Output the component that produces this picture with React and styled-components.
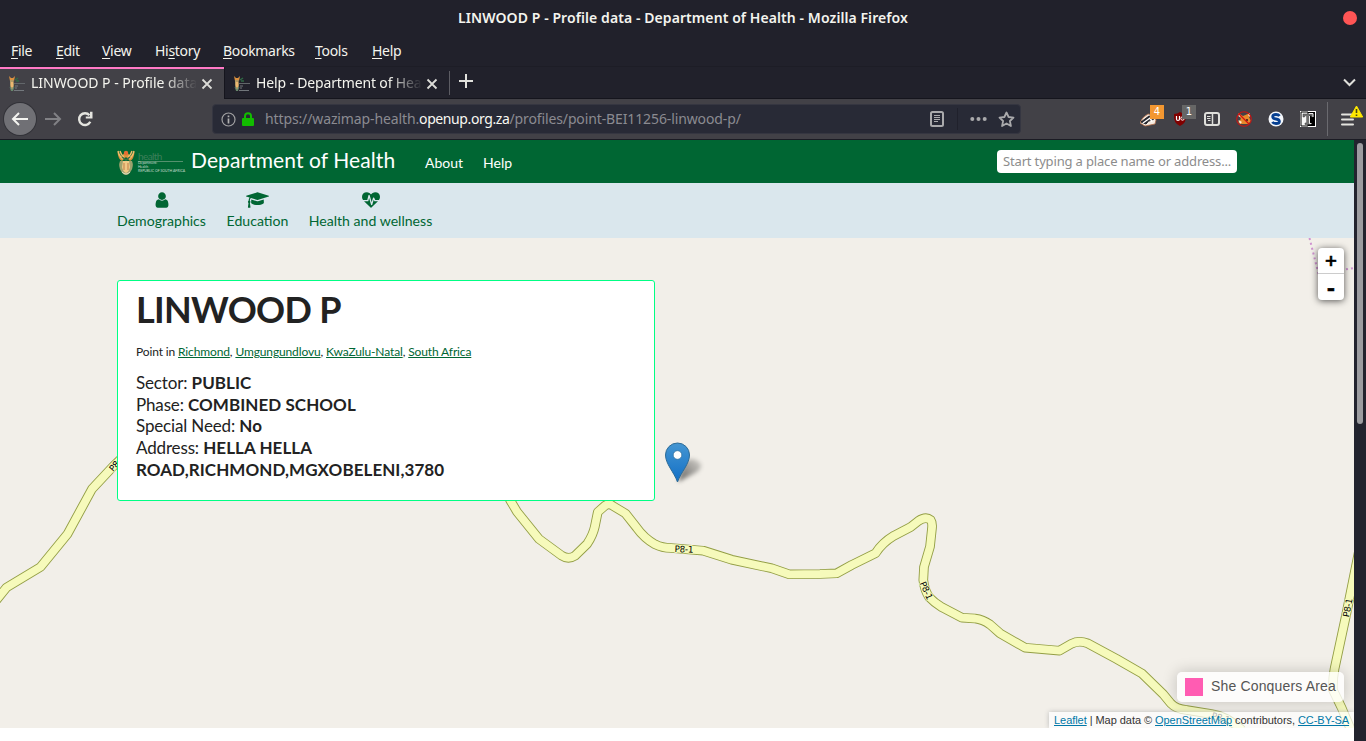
import React from 'react';
import styled, { createGlobalStyle } from 'styled-components';

const Global = createGlobalStyle`
  * { box-sizing: border-box; }
  body { margin: 0; overflow: hidden; }
  svg { display: block; flex: none; }
`;

const Window = styled.div`
  width: 1366px;
  height: 741px;
  display: flex;
  flex-direction: column;
  background: #21212b;
  color: #f4f4ee;
  font: 14px/20px "Noto Sans", sans-serif;
  overflow: hidden;
  white-space: nowrap;
`;

const TitleBar = styled.header`
  height: 36px;
  display: grid;
  grid-template-columns: 1fr auto 1fr;
  align-items: center;
  padding: 0 10px;
`;
const WindowTitle = styled.h1`
  grid-column: 2;
  margin: 0;
  font-size: 14px;
  font-weight: 600;
  letter-spacing: ${(p) => p.$spacing}px;
`;
const CloseDot = styled.span`
  justify-self: end;
  width: 14px;
  height: 14px;
  margin-right: -1px;
  border-radius: 50%;
  background: #ff5555;
`;

const MenuBar = styled.nav`
  height: 30px;
  display: flex;
  align-items: center;
  padding-left: 11px;
`;
const MenuItem = styled.span`
  width: ${(p) => p.$width}px;
  letter-spacing: -0.3px;
  u { text-underline-offset: 2px; text-decoration-thickness: 1px; }
`;

const TabStrip = styled.div`
  height: 33px;
  display: flex;
  border-top: 1px solid #1d1d26;
  border-bottom: 1px solid #15151d;
`;
const Tab = styled.div`
  width: ${(p) => p.$width}px;
  height: ${(p) => (p.$active ? 33 : 31)}px;
  display: flex;
  align-items: center;
  padding: 0 0 ${(p) => (p.$active ? 2 : 0)}px 8px;
  background: ${(p) => (p.$active ? '#424147' : 'transparent')};
  border-top: 2px solid ${(p) => (p.$active ? '#ff79c6' : 'transparent')};
  border-left: ${(p) => (p.$active ? 'none' : '1px solid #15151d')};
`;
const TabLabel = styled.span`
  width: 166px;
  margin: 0 4px 1px 6px;
  overflow: hidden;
  letter-spacing: ${(p) => p.$spacing}px;
  mask-image: linear-gradient(to right, #000 80%, transparent);
`;
const StripDivider = styled.span`
  width: 1px;
  height: 24px;
  margin: 4px 9px 0 0;
  background: #5c5c63;
`;
const NewTab = styled.svg`margin-top: 7px;`;
const AllTabs = styled.svg`margin: 11px 10px 0 auto;`;

const Toolbar = styled.div`
  height: 41px;
  display: flex;
  align-items: center;
  padding-left: 4px;
  background: #424147;
  border-bottom: 1px solid #1b1b24;
`;
const BackButton = styled.span`
  width: 32px;
  height: 32px;
  display: flex;
  align-items: center;
  justify-content: center;
  border-radius: 50%;
  background: #707075;
  box-shadow: 0 0 0 1px #323238;
`;
const NavIcon = styled.svg`margin-left: ${(p) => p.$gap}px;`;
const UrlBar = styled.div`
  width: 809px;
  height: 30px;
  margin-left: 119px;
  display: flex;
  align-items: center;
  padding-left: 8px;
  border: 1px solid #353641;
  border-radius: 4px;
  background: #282a36;
`;
const Url = styled.span`
  width: 662px;
  margin: 0 0 1px 11px;
  color: #8b8b91;
  letter-spacing: ${(p) => p.$spacing}px;
  b { font-weight: 400; color: #f8f8f2; letter-spacing: -0.4px; }
`;
const UrlDivider = styled.span`
  width: 1px;
  height: 22px;
  margin: 0 12px 0 13px;
  background: #20212c;
`;
const Extensions = styled.div`
  display: flex;
  align-items: center;
  gap: 16px;
  margin-left: 119px;
`;
const Extension = styled.span`
  position: relative;
  width: 16px;
  height: 16px;
`;
const Badge = styled.span`
  position: absolute;
  top: -6px;
  left: 10px;
  width: 14px;
  height: 14px;
  text-align: center;
  font: 10px/13px "DejaVu Sans", sans-serif;
  color: #fff;
  background: ${(p) => p.$color};
`;
const ToolbarDivider = styled.span`
  width: 1px;
  height: 34px;
  margin: 0 12px 0 11px;
  background: #6a6a6f;
`;

const Viewport = styled.div`
  flex: 1;
  display: flex;
`;
const Page = styled.main`
  width: 1354px;
  display: flex;
  flex-direction: column;
  background: #fff;
  font-family: Lato, sans-serif;
`;
const ScrollTrack = styled.div`
  width: 12px;
  padding: 3px 3px 0;
  background: #22232e;
`;
const ScrollThumb = styled.div`
  width: 6px;
  height: 281px;
  border-radius: 3px;
  background: #9c9ca0;
`;

const SiteHeader = styled.header`
  height: 43px;
  display: flex;
  align-items: center;
  padding: 0 117px;
  background: #006633;
  color: #fff;
`;
const SiteName = styled.span`
  width: 234px;
  margin: 0 0 4px 8px;
  font-size: 21px;
  line-height: 26px;
  letter-spacing: ${(p) => p.$spacing}px;
`;
const SiteLink = styled.a`
  margin: 3px 20px 0 0;
  font-size: 14px;
  letter-spacing: ${(p) => p.$spacing}px;
`;
const Search = styled.div`
  width: 240px;
  height: 23px;
  margin: 0 0 1px auto;
  padding-left: 6px;
  border-radius: 4px;
  background: #fff;
  color: #8c8c8c;
  font: 13px/23px "Noto Sans", sans-serif;
  letter-spacing: ${(p) => p.$spacing}px;
`;

const TopicNav = styled.nav`
  height: 55px;
  display: flex;
  gap: 20px;
  padding: 7px 117px 0;
  background: #dae7ed;
  color: #006633;
`;
const Topic = styled.a`
  display: flex;
  flex-direction: column;
  align-items: center;
  width: ${(p) => p.$width}px;
  font-size: 14.1px;
  line-height: 20px;
  svg { height: 18px; margin: 1px 0 2px; }
`;

const Map = styled.section`
  position: relative;
  height: 490px;
  background: #f2efe9;
  overflow: hidden;
`;
const Roads = styled.svg`
  position: absolute;
  inset: 0;
`;
const ProfileCard = styled.article`
  position: absolute;
  left: 117px;
  top: 42px;
  width: 538px;
  height: 221px;
  padding: 0 18px;
  border: 1px solid #00ff84;
  border-radius: 3px;
  background: #fff;
  color: #222;
`;
const PlaceName = styled.h2`
  margin: 7px 0 0;
  font: 700 36px/42px Lato, sans-serif;
  letter-spacing: ${(p) => p.$spacing}px;
`;
const Breadcrumb = styled.p`
  margin: 13px 0 11px;
  font-size: 12px;
  line-height: 18px;
  letter-spacing: ${(p) => p.$spacing}px;
  a { color: #006633; text-decoration: underline; }
`;
const Facts = styled.div`
  font-size: 17px;
  line-height: 21.7px;
  letter-spacing: -0.15px;
  b { letter-spacing: ${(p) => p.$spacing}px; }
`;
const ZoomControl = styled.div`
  position: absolute;
  right: 10px;
  top: 10px;
  width: 26px;
  border-radius: 4px;
  background: #fff;
  box-shadow: 0 1px 7px rgba(0, 0, 0, 0.65);
`;
const ZoomButton = styled.div`
  height: 26px;
  border-bottom: ${(p) => (p.$last ? 'none' : '1px solid #ccc')};
  text-align: center;
  color: #000;
  font: 700 ${(p) => (p.$last ? 20 : 16)}px/${(p) => (p.$last ? 28 : 26)}px "DejaVu Sans", sans-serif;
  -webkit-text-stroke: 0.5px #000;
`;
const Legend = styled.div`
  position: absolute;
  right: 10px;
  bottom: 26px;
  width: 167px;
  height: 30px;
  display: flex;
  align-items: center;
  gap: 8px;
  padding: 0 8px;
  border-radius: 5px;
  background: rgba(255, 255, 255, 0.8);
  box-shadow: 0 0 15px rgba(0, 0, 0, 0.2);
  color: #555;
  font: 14px/18px "Liberation Sans", sans-serif;
  letter-spacing: ${(p) => p.$spacing}px;
`;
const LegendLabel = styled.span`margin-bottom: 2px;`;
const Swatch = styled.span`
  width: 18px;
  height: 18px;
  background: #ff5cb2;
`;
const Attribution = styled.div`
  position: absolute;
  right: 0;
  bottom: 0;
  width: 305px;
  height: 16px;
  padding-left: 5px;
  background: rgba(255, 255, 255, 0.7);
  box-shadow: 0 0 5px #bbb;
  color: #333;
  font: 11px/16px "Liberation Sans", sans-serif;
  letter-spacing: -0.05px;
  a { color: #0078a8; text-decoration: underline; }
`;

const roads = [
  'M-6 603L6.5 587.5L40.5 567L67.5 534L92 489L113.5 466L124 456',
  'M505 490L510.5 500.7L517 511.7L539 539L561.5 555.5Q568.3 560 575 555.7L587.3 543.7Q593 535 594.8 526.7L597.8 512L605 505.7Q609.3 502.5 613 506L625.5 513.5L636.7 527.7Q644 538 655 544.3Q662 548 671 548L683 549L703.3 550.7L731.7 559.7L771.7 568.3L789 574.3L820 574L836.7 573.3L851.7 565L875.5 553.3Q882 543 894 535.7L910.7 527L918.3 521Q925.7 516 930.7 520Q932.5 522.5 932 528L930 546.7L924 567L923.3 580Q924.5 590 929 597Q934 602.5 942 607.3L962 617.7L975 618.5Q983 619.5 990 624.5L1000 633.3L1025 647.7L1059.5 650.7L1071.7 643.7Q1079 640 1087.5 643.3L1116.7 659L1141.7 673.3L1163.3 694.3L1170.7 703.3Q1176 709 1186.7 710L1213 714.3Q1226 716 1242 730',
  'M1359 551L1346.3 614L1334.5 669Q1332.5 680 1333 690L1341.7 708L1351 730',
];

const roadLabels = [
  { x: 117, y: 463, angle: -49 },
  { x: 684, y: 549, angle: 2 },
  { x: 926.5, y: 590.5, angle: 66 },
  { x: 1347.5, y: 607.5, angle: -79 },
  { x: 1221, y: 717.5, angle: 14 },
];

function RoadMap() {
  return (
    <Roads width="1354" height="490" viewBox="0 238 1354 490">
      <defs>
        <linearGradient id="pin" x1="0" y1="0" x2="0" y2="1">
          <stop offset="0" stopColor="#4596d2" />
          <stop offset="1" stopColor="#126fc6" />
        </linearGradient>
        <linearGradient id="pinShade" x1="0" y1="1" x2="1" y2="0">
          <stop offset="0" stopColor="#000" stopOpacity=".6" />
          <stop offset="1" stopColor="#000" stopOpacity=".12" />
        </linearGradient>
        <filter id="soft" x="-50%" y="-50%" width="200%" height="200%">
          <feGaussianBlur stdDeviation="2" />
        </filter>
      </defs>
      <g fill="none" strokeLinejoin="round">
        {roads.map((d) => <path key={d} d={d} stroke="#939e45" strokeWidth="9.6" />)}
        {roads.map((d) => <path key={d} d={d} stroke="#f6fabb" strokeWidth="7.8" />)}
        <path d="M1309.500 238L1318.500 274L1354 268" stroke="#cf93d0" strokeWidth="2" strokeDasharray="2 3" />
      </g>
      <g fontFamily="DejaVu Sans, sans-serif" fontSize="9" fill="#000" stroke="#f6fabb" strokeWidth="1.6" paintOrder="stroke" textAnchor="middle">
        {roadLabels.map((l) => (
          <text key={l.x} transform={`translate(${l.x} ${l.y}) rotate(${l.angle})`} y="3.3" textLength="19">P8-1</text>
        ))}
      </g>
      <path d="M678 482L683 464Q690 456 698 461Q705 466 697 472Z" fill="url(#pinShade)" filter="url(#soft)" />
      <path d="M677.500 482C674 472 665.500 464 665.500 455A12 12 0 0 1 689.500 455C689.500 464 681 472 677.500 482Z" fill="url(#pin)" stroke="#2e6c97" strokeWidth="1" />
      <circle cx="677.5" cy="455" r="4.3" fill="#fff" stroke="#2e6c97" strokeWidth=".7" />
    </Roads>
  );
}

function Emblem({ size, height }) {
  return (
    <svg width={size} height={height} viewBox="0 0 18 26">
      <path d="M.5 2Q1 9 5 11L9 7L13 11Q17 9 17.500 2L14 7L9 1L4 7Z" fill="#d9913c" />
      <path d="M1 1Q2 6 6 9M17 1Q16 6 12 9M3 1Q4 5 7 7M15 1Q14 5 11 7" fill="none" stroke="#f0bd6b" strokeWidth="1.4" />
      <circle cx="9" cy="3" r="2.2" fill="#e66f35" />
      <path d="M5 7L9 10L13 7" fill="none" stroke="#397149" strokeWidth="1.5" />
      <path d="M3 11H15Q17 16 14 21Q12 25 9 25Q6 25 4 21Q1 16 3 11Z" fill="#9da16d" />
      <path d="M6 11H12L13 17Q12 22 9 23Q6 22 5 17Z" fill="#efc886" />
      <path d="M7 13V20M11 13V20" stroke="#c98a52" strokeWidth="1.200" />
      <path d="M5 22Q9 26 13 22" fill="none" stroke="#dfe2c1" strokeWidth="1" />
    </svg>
  );
}

const LogoMark = styled.div`
  width: 66px;
  height: 26px;
  display: flex;
  gap: 3px;
  margin-top: 3px;
`;
const LogoText = styled.div`
  width: 45px;
  padding-top: 1px;
  color: #6da282;
  font: 10px/10px Lato, sans-serif;
  i { display: block; font-style: normal; color: #3c7f59; border-bottom: 1px solid #55916e; height: 11px; letter-spacing: -0.6px; }
  small { display: block; font-size: 3.5px; line-height: 3.9px; letter-spacing: -0.03px; color: #c8dccf; }
`;

function Favicon() {
  return (
    <svg width="17" height="17" viewBox="0 0 17 17">
      <path d="M1 1L2 6L4.500 5L6 6L7 1L5 3H3Z" fill="#db9140" />
      <path d="M2 5H5.500L6 10L5 16H3L2 10Z" fill="#b59a63" />
      <path d="M3 7H5V12H3Z" fill="#edb771" />
      <path d="M2 12L4 16L6 12" fill="none" stroke="#548471" />
      <path d="M7 5L10 3M8 6H11" stroke="#2f6a45" strokeWidth="1.500" />
      <path d="M6 8.500H17" stroke="#62666a" />
      <path d="M7 11H10M7 13H9M6 15.500H16" stroke="#7b8084" strokeWidth=".9" />
    </svg>
  );
}

function TabClose() {
  return (
    <svg width="12" height="12" viewBox="0 0 12 12">
      <path d="M1.500 1.500L10.500 10.500M10.500 1.500L1.500 10.500" stroke="#dcdcd8" strokeWidth="1.8" />
    </svg>
  );
}

const menus = [['', 'F', 'ile', 45], ['', 'E', 'dit', 46], ['', 'V', 'iew', 53], ['Hi', 's', 'tory', 68], ['', 'B', 'ookmarks', 92], ['', 'T', 'ools', 57], ['', 'H', 'elp', 40]];

function FirefoxToolbar() {
  return (
    <Toolbar>
      <BackButton>
        <svg width="18" height="16" viewBox="0 0 18 16"><path d="M17 8H2M8 2L2 8L8 14" fill="none" stroke="#f4f4f0" strokeWidth="2" /></svg>
      </BackButton>
      <NavIcon $gap={9} width="17" height="16" viewBox="0 0 17 16"><path d="M0 8H15M9 2L15 8L9 14" fill="none" stroke="#818185" strokeWidth="2" /></NavIcon>
      <NavIcon $gap={15} width="16" height="16" viewBox="0 0 16 16">
        <path d="M13.300 10.800A5.900 5.900 0 1 1 12.500 4.200" fill="none" stroke="#e4e4df" strokeWidth="2.400" />
        <path d="M15.500 .8V7.500H8.800V5.500H13V.8Z" fill="#e4e4df" />
      </NavIcon>
      <UrlBar>
        <svg width="15" height="15" viewBox="0 0 15 15">
          <circle cx="7.500" cy="7.500" r="6.500" fill="none" stroke="#a0a0a2" strokeWidth="1.200" />
          <path d="M7.500 6.500V11.500M7.500 3.500V5.300" stroke="#b0b0b0" strokeWidth="1.700" />
        </svg>
        <NavIcon $gap={6} width="12" height="14" viewBox="0 0 12 14">
          <path d="M3 7V4Q3 1.200 6 1.200T9 4V7" fill="none" stroke="#12bc00" strokeWidth="2" />
          <rect y="6" width="12" height="8" rx="1" fill="#12bc00" />
        </NavIcon>
        <Url $spacing={-0.12}>https://wazimap-health.<b>openup.org.za</b>/profiles/point-BEI11256-linwood-p/</Url>
        <NavIcon $gap={3} width="14" height="16" viewBox="0 0 14 16">
          <rect x="1" y="1" width="12" height="14" rx="1.500" fill="none" stroke="#aaaaac" strokeWidth="2" />
          <path d="M4 4.500H10M4 6.500H10M4 8.500H10M4 10.500H8" stroke="#aaaaac" />
        </NavIcon>
        <UrlDivider />
        <svg width="17" height="6" viewBox="0 0 17 6" fill="#aaaaac"><circle cx="2.300" cy="3" r="2" /><circle cx="8.500" cy="3" r="2" /><circle cx="14.700" cy="3" r="2" /></svg>
        <NavIcon $gap={11} width="17" height="17" viewBox="0 0 17 17">
          <path d="M8.500 1.500L10.600 6L15.500 6.600L11.900 10L12.900 15L8.500 12.500L4.100 15L5.100 10L1.500 6.600L6.400 6Z" fill="none" stroke="#aaaaac" strokeWidth="1.800" strokeLinejoin="round" />
        </NavIcon>
      </UrlBar>
      <Extensions>
        <Extension>
          <svg width="17" height="16" viewBox="0 0 17 16">
            <path d="M0 12Q2 6 8 3L13 4L16 9L15 13L5 15Z" fill="#f5e9df" stroke="#b46d48" strokeWidth=".8" />
            <path d="M1 11L9 5L12 6L6 13ZM9 10L14 8" fill="#24242a" stroke="#24242a" />
            <path d="M3 12L10 7L12 11" fill="none" stroke="#fff" strokeWidth="1.500" />
          </svg>
          <Badge $color="#f39731">4</Badge>
        </Extension>
        <Extension>
          <svg width="16" height="16" viewBox="0 0 16 16">
            <path d="M8 1Q11 3 14 3Q15 12 8 15Q1 12 2 3Q5 3 8 1Z" fill="#800000" />
            <path d="M4.500 5V8Q4.500 9.500 6 9.500T7.500 8V5" fill="none" stroke="#fff" strokeWidth="1.200" />
            <circle cx="10.500" cy="7.500" r="1.700" fill="none" stroke="#fff" />
          </svg>
          <Badge $color="#666666">1</Badge>
        </Extension>
        <Extension>
          <svg width="16" height="16" viewBox="0 0 16 16">
            <rect x="1" y="2" width="14" height="12" rx="2" fill="none" stroke="#dfdfdb" strokeWidth="2" />
            <path d="M8.500 2V14" stroke="#dfdfdb" strokeWidth="1.500" />
            <path d="M3 5.500H6.500M3 7.500H6.500M4 9.500H6.500" stroke="#dfdfdb" />
          </svg>
        </Extension>
        <Extension>
          <svg width="16" height="16" viewBox="0 0 16 16">
            <path d="M2 2L7 5L14 2L13 6L15 10L12 13H5L2 11L5 8Z" fill="#e8892b" />
            <path d="M2.500 9L6 11L4 13ZM12 4L14 2V6ZM2 3L5 5L3 6Z" fill="#fff1d8" />
            <path d="M10 8H12V10H10Z" fill="#5d3520" />
            <circle cx="8" cy="8" r="7.300" fill="none" stroke="#c81414" strokeWidth="1.100" />
            <path d="M3 3L13 13" stroke="#d31111" strokeWidth="1.300" />
          </svg>
        </Extension>
        <Extension>
          <svg width="16" height="16" viewBox="0 0 16 16">
            <circle cx="8" cy="8" r="7.500" fill="#f4f7fb" />
            <path d="M11.500 5Q10.500 3.500 8 3.500Q4.700 3.500 4.700 5.700Q4.700 7.500 8 8Q11.400 8.500 11.400 10.400Q11.400 12.500 8 12.500Q5.500 12.500 4.300 11" fill="none" stroke="#063f91" strokeWidth="2.800" />
          </svg>
        </Extension>
        <Extension>
          <svg width="16" height="16" viewBox="0 0 16 16">
            <path d="M0 0H16V16H0Z" fill="#fff" />
            <path d="M1 1H8V15H1Z" fill="#f8f8f8" stroke="#000" />
            <path d="M8 1H15V15H8Z" fill="#000" />
            <path d="M3 3H13V6H11.500V4.800H9.300V12H11V13.500H5V12H6.700V4.800H4.500V6H3Z" fill="#777" stroke="#333" strokeWidth=".5" />
            <path d="M8.500 2.500H13V6M9.500 5V12.500H11.500" fill="none" stroke="#eee" />
          </svg>
        </Extension>
      </Extensions>
      <ToolbarDivider />
      <svg width="24" height="30" viewBox="0 0 24 30">
        <path d="M2 10.500H13M2 15.500H13M2 20.500H13" stroke="#e4e4df" strokeWidth="2" strokeLinecap="round" />
        <path d="M16.500 2L22.700 13H10.300Z" fill="#ffe900" stroke="#ffe900" strokeLinejoin="round" />
        <path d="M16.500 5V9M16.500 10.500V12" stroke="#4a4710" strokeWidth="1.600" />
      </svg>
    </Toolbar>
  );
}

export default function App() {
  return (
    <Window>
      <Global />
      <TitleBar>
        <WindowTitle $spacing={0.08}>LINWOOD P - Profile data - Department of Health - Mozilla Firefox</WindowTitle>
        <CloseDot />
      </TitleBar>
      <MenuBar>
        {menus.map(([before, key, after, width]) => (
          <MenuItem key={after} $width={width}>{before}<u>{key}</u>{after}</MenuItem>
        ))}
      </MenuBar>
      <TabStrip>
        <Tab $active $width={224}><Favicon /><TabLabel $spacing={-0.03}>LINWOOD P - Profile data</TabLabel><TabClose /></Tab>
        <Tab $width={225}><Favicon /><TabLabel $spacing={-0.15}>Help - Department of Health</TabLabel><TabClose /></Tab>
        <StripDivider />
        <NewTab width="14" height="14" viewBox="0 0 14 14"><path d="M7 0V14M0 7H14" stroke="#e2e2dd" strokeWidth="2" /></NewTab>
        <AllTabs width="13" height="9" viewBox="0 0 13 9"><path d="M1 1.500L6.500 7L12 1.500" fill="none" stroke="#dfdfdb" strokeWidth="2" /></AllTabs>
      </TabStrip>
      <FirefoxToolbar />
      <Viewport>
        <Page>
          <SiteHeader>
            <LogoMark>
              <Emblem size={18} height={26} />
              <LogoText><i>health</i><small>Department:</small><small>Health</small><small>REPUBLIC OF SOUTH AFRICA</small></LogoText>
            </LogoMark>
            <SiteName $spacing={0.08}>Department of Health</SiteName>
            <SiteLink $spacing={0}>About</SiteLink>
            <SiteLink $spacing={0}>Help</SiteLink>
            <Search $spacing={-0.16}>Start typing a place name or address...</Search>
          </SiteHeader>
          <TopicNav>
            <Topic $width={89}>
              <svg width="18" viewBox="0 0 1792 1792" fill="currentColor"><path d="M1536 1399q0 109-62.500 187t-150.500 78h-854q-88 0-150.500-78t-62.500-187q0-85 8.500-160.500t31.500-152 58.500-131 94-89 134.500-34.500q131 128 313 128t313-128q76 0 134.500 34.500t94 89 58.500 131 31.500 152 8.500 160.500zm-256-887q0 159-112.500 271.500t-271.500 112.500-271.500-112.500-112.500-271.500 112.500-271.500 271.500-112.500 271.500 112.500 112.500 271.500z" /></svg>
              Demographics
            </Topic>
            <Topic $width={63}>
              <svg width="23" viewBox="0 0 2304 1792" fill="currentColor"><path d="M1774 836l18 316q4 69-82 128t-235 93.500-323 34.500-323-34.500-235-93.500-82-128l18-316 574 181q22 7 48 7t48-7zm530-324q0 23-22 31l-1120 352q-4 1-10 1t-10-1l-652-206q-43 34-71 111.500t-34 178.500q63 36 63 109 0 69-58 107l58 433q2 14-8 25-9 11-24 11h-192q-15 0-24-11-10-11-8-25l58-433q-58-38-58-107 0-73 65-111 11-207 98-330l-333-104q-22-8-22-31t22-31l1120-352q4-1 10-1t10 1l1120 352q22 8 22 31z" /></svg>
              Education
            </Topic>
            <Topic $width={123}>
              <svg width="18" viewBox="0 0 1792 1792" fill="currentColor"><path d="M1280 1024h305q-5 6-10 10.500t-9 7.500l-3 4-623 600q-18 18-44 18t-44-18l-624-602q-5-2-21-20h369q22 0 39.500-13.500t22.500-34.500l70-281 190 667q6 20 23 33t39 13q21 0 38-13t23-33l146-485 56 112q18 35 57 35zm512-428q0 145-103 300h-369l-111-221q-8-17-25.500-27t-36.500-8q-45 5-56 46l-129 430-196-686q-6-20-23.500-33t-39.500-13-39 13.500-22 34.500l-116 464h-423q-103-155-103-300 0-220 127-344t351-124q62 0 126.500 21.500t120 58 95.500 68.500 76 68q36-36 76-68t95.500-68.500 120-58 126.500-21.500q224 0 351 124t127 344z" /></svg>
              Health and wellness
            </Topic>
          </TopicNav>
          <Map>
            <RoadMap />
            <ProfileCard>
              <PlaceName $spacing={-0.7}>LINWOOD P</PlaceName>
              <Breadcrumb $spacing={-0.13}>Point in <a>Richmond</a>, <a>Umgungundlovu</a>, <a>KwaZulu-Natal</a>, <a>South Africa</a></Breadcrumb>
              <Facts $spacing={0.06}>
                <div>Sector: <b>PUBLIC</b></div>
                <div>Phase: <b>COMBINED SCHOOL</b></div>
                <div>Special Need: <b>No</b></div>
                <div>Address: <b>HELLA HELLA<br />ROAD,RICHMOND,MGXOBELENI,3780</b></div>
              </Facts>
            </ProfileCard>
            <ZoomControl><ZoomButton>+</ZoomButton><ZoomButton $last>-</ZoomButton></ZoomControl>
            <Legend $spacing={0.16}><Swatch /><LegendLabel>She Conquers Area</LegendLabel></Legend>
            <Attribution><a>Leaflet</a> | Map data © <a>OpenStreetMap</a> contributors, <a>CC-BY-SA</a></Attribution>
          </Map>
        </Page>
        <ScrollTrack><ScrollThumb /></ScrollTrack>
      </Viewport>
    </Window>
  );
}
